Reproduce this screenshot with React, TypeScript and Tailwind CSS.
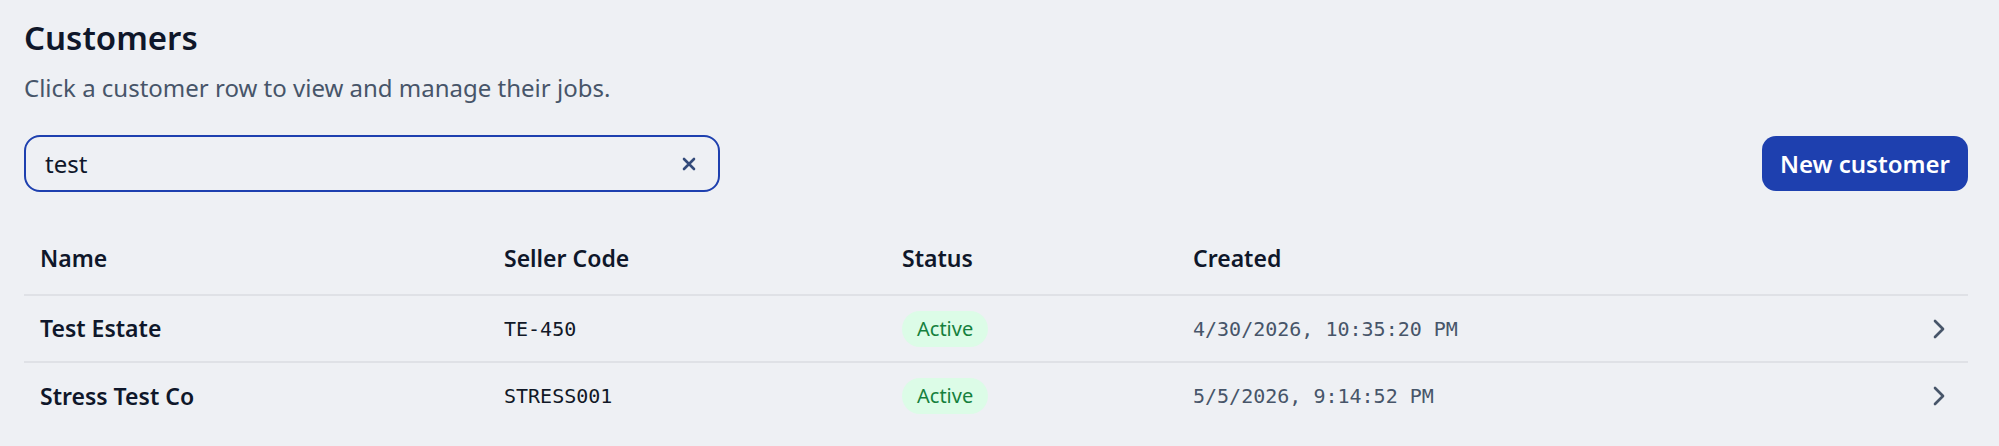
import React from "react";

const rows = [
  { name: "Test Estate", code: "TE-450", status: "Active", created: "4/30/2026, 10:35:20 PM" },
  { name: "Stress Test Co", code: "STRESS001", status: "Active", created: "5/5/2026, 9:14:52 PM" },
];

function Chevron() {
  return (
    <svg width="32" height="32" viewBox="0 0 24 24" fill="none" stroke="currentColor" strokeWidth="2" strokeLinecap="round" strokeLinejoin="round">
      <path d="m9 18 6-6-6-6" />
    </svg>
  );
}

export default function App() {
  return (
    <div className="min-h-screen bg-[#eef0f4] pl-6 pr-[31px] pt-[16px] font-['Noto_Sans',sans-serif] text-[#0f172a]">
      <h1 className="text-[33px] leading-[44px] font-semibold text-[#0f172a]">Customers</h1>
      <p className="mt-[12px] text-[24px] leading-[32px] text-[#475569]">Click a customer row to view and manage their jobs.</p>

      <div className="mt-[31px] flex items-center justify-between">
        <div className="flex h-[57px] w-[696px] items-center rounded-[16px] border-2 border-[#1e40af] pl-[19px] pr-[21px]">
          <span className="flex-1 text-[24px] leading-[32px] text-[#0f172a]">test</span>
          <svg width="16" height="16" viewBox="0 0 16 16" fill="none" stroke="#334a7a" strokeWidth="2.6" strokeLinecap="round">
            <path d="M3 3 L13 13 M13 3 L3 13" />
          </svg>
        </div>
        <button className="h-[55px] rounded-[14px] bg-[#1e40af] px-[18px] text-[24px] font-semibold leading-[32px] text-white">
          New customer
        </button>
      </div>

      <table className="mt-[30px] w-full table-fixed border-collapse">
        <colgroup>
          <col className="w-[464px]" />
          <col className="w-[398px]" />
          <col className="w-[291px]" />
          <col />
          <col className="w-[64px]" />
        </colgroup>
        <thead>
          <tr className="h-[73px] border-b-2 border-[#dfe1e6] text-left">
            <th className="px-4 text-[23px] font-semibold text-[#0f172a]">Name</th>
            <th className="px-4 text-[23px] font-semibold text-[#0f172a]">Seller Code</th>
            <th className="px-4 text-[23px] font-semibold text-[#0f172a]">Status</th>
            <th className="px-4 text-[23px] font-semibold text-[#0f172a]">Created</th>
            <th />
          </tr>
        </thead>
        <tbody>
          {rows.map((r, i) => (
            <tr key={r.code} className={i < rows.length - 1 ? "h-[67px] border-b-2 border-[#dfe1e6]" : "h-[67px]"}>
              <td className="px-4 text-[23px] font-semibold text-[#0f172a]">{r.name}</td>
              <td className="px-4 font-['DejaVu_Sans_Mono',monospace] text-[20px] text-[#111827]">{r.code}</td>
              <td className="px-4">
                <span className="inline-flex h-[36px] items-center rounded-full bg-[#dcfce7] px-[15px] text-[20px] text-[#15803d]">
                  {r.status}
                </span>
              </td>
              <td className="px-4 font-['DejaVu_Sans_Mono',monospace] text-[20px] text-[#475569]">{r.created}</td>
              <td className="pr-[13px] text-[#475569]">
                <div className="flex justify-end">
                  <Chevron />
                </div>
              </td>
            </tr>
          ))}
        </tbody>
      </table>
    </div>
  );
}
